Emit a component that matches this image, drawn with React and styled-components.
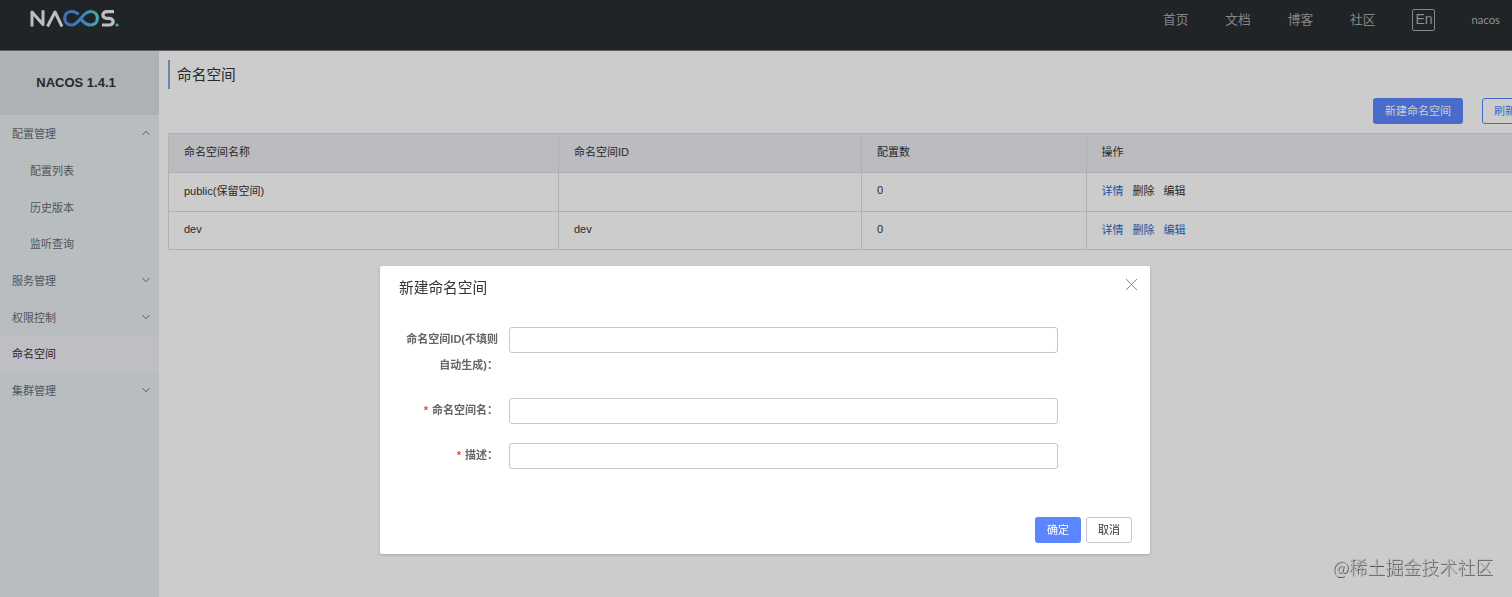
import React, { useState } from 'react';
import styled, { createGlobalStyle } from 'styled-components';

const GlobalStyle = createGlobalStyle`
  * {
    box-sizing: border-box;
  }

  body {
    margin: 0;
    overflow: hidden;
    font-family: 'Liberation Sans', 'Noto Sans CJK SC', sans-serif;
    font-size: 11px;
    color: #333;
    background: #fff;
  }

  button,
  input {
    font-family: inherit;
  }
`;

const Page = styled.div`
  display: flex;
  flex-direction: column;
  width: 1512px;
  height: 597px;
  overflow: hidden;
`;

const Header = styled.header`
  display: flex;
  flex: none;
  align-items: flex-start;
  justify-content: space-between;
  height: 51px;
  padding: 9px 12px 0 30px;
  background: #282d30;
  border-bottom: 1px solid #75787a;
`;

const Nav = styled.nav`
  display: flex;
  align-items: center;
  height: 22px;
`;

const NavLink = styled.a`
  margin-right: 37px;
  font-size: 12.7px;
  line-height: 22px;
  color: #a5a8aa;
  white-space: nowrap;
`;

const LanguageSwitch = styled.span`
  width: 23px;
  height: 22px;
  margin-right: 36px;
  border: 1px solid #a5a8aa;
  border-radius: 2px;
  font-size: 14px;
  line-height: 19px;
  text-align: center;
  color: #b0b3b5;
`;

const UserName = styled.span`
  font-family: Lato, sans-serif;
  font-size: 11.3px;
  line-height: 22px;
  color: #b4b6b8;
`;

const Body = styled.div`
  display: flex;
  flex: 1;
  min-height: 0;
`;

const Sidebar = styled.aside`
  flex: none;
  width: 159px;
  background: #e7edf1;
`;

const Version = styled.div`
  height: 64px;
  padding-right: 7px;
  font-size: 13px;
  font-weight: bold;
  line-height: 64px;
  text-align: center;
  background: #d9dfe2;
`;

const MenuItem = styled.div`
  display: flex;
  align-items: center;
  justify-content: space-between;
  height: 36.7px;
  padding: 0 9px 0 ${props => (props.$nested ? '30px' : '12px')};
  color: ${props => (props.$active ? '#333' : '#666b70')};
  background: ${props => (props.$active ? '#efeef4' : 'transparent')};
`;

const Content = styled.main`
  flex: 1;
  min-width: 0;
  padding: 9px 0 0 9px;
  overflow: hidden;
`;

const Title = styled.h1`
  height: 29px;
  margin: 0;
  padding-left: 7px;
  border-left: 2px solid #86a9db;
  font-size: 14.7px;
  font-weight: normal;
  line-height: 31px;
`;

const Toolbar = styled.div`
  display: flex;
  justify-content: flex-end;
  gap: 19px;
  height: 26px;
  margin: 9px -16px 9px 0;
`;

const Button = styled.button`
  flex: none;
  height: 26px;
  padding: 0 11px;
  border: 1px solid ${props => (props.$outline ? '#5584ff' : props.$primary ? 'transparent' : '#c4c6cf')};
  border-radius: 3px;
  font-size: 11px;
  line-height: 24px;
  white-space: nowrap;
  color: ${props => (props.$outline ? '#5584ff' : props.$primary ? '#fff' : '#333')};
  background: ${props => (props.$primary ? '#5c86ff' : props.$outline ? 'transparent' : '#fff')};
`;

const Table = styled.div`
  width: 1376px;
  border: 1px solid #dcdee3;
`;

const Row = styled.div`
  display: grid;
  grid-template-columns: 389.4px 303px 224.6px 1fr;
  height: 38px;
  background: ${props => (props.$head ? '#ebecf0' : '#fff')};

  & + & {
    height: 38.5px;
    border-top: 1px solid #dcdee3;
  }
`;

const Cell = styled.div`
  display: flex;
  align-items: center;
  gap: 9px;
  padding: 0 0 ${props => (props.$head ? '3.5px' : '3px')} 15px;

  & + & {
    padding-left: 14.5px;
    border-left: 1px solid #dcdee3;
  }
`;

const Action = styled.a`
  color: ${props => (props.$disabled ? '#333' : '#2b69c4')};
`;

const Mask = styled.div`
  position: fixed;
  inset: 0;
  display: flex;
  align-items: flex-start;
  justify-content: center;
  padding: 266px 0 0 18px;
  background: rgba(0, 0, 0, 0.2);
`;

const Dialog = styled.div`
  display: flex;
  flex-direction: column;
  width: 770px;
  height: 288px;
  padding: 9px 18px 11px 19px;
  border-radius: 2px;
  background: #fff;
  box-shadow: 0 1px 3px rgba(0, 0, 0, 0.2);
`;

const DialogHeader = styled.div`
  display: flex;
  align-items: flex-start;
  justify-content: space-between;
  height: 52px;
`;

const DialogTitle = styled.div`
  font-size: 14.7px;
  line-height: 27px;
`;

const CloseButton = styled.button`
  display: flex;
  margin: 3px -6px 0 0;
  padding: 0;
  border: none;
  background: none;
  cursor: pointer;
`;

const Field = styled.div`
  display: flex;
  min-height: 26px;
  margin-bottom: 19px;
`;

const Label = styled.label`
  width: 99px;
  margin: -1px 11px 1px 0;
  font-weight: bold;
  line-height: 26px;
  text-align: right;
  white-space: nowrap;
  color: #666;

  em {
    margin-right: 4px;
    font-style: normal;
    color: #e8492b;
  }
`;

const Input = styled.input`
  width: 549px;
  height: 26px;
  padding: 0 8px;
  border: 1px solid #c6c7ca;
  border-radius: 3px;
  font-size: 11px;
  outline: none;
`;

const DialogFooter = styled.div`
  display: flex;
  justify-content: flex-end;
  gap: 5px;
  margin-top: auto;
`;

const Watermark = styled.div`
  position: fixed;
  right: 19px;
  bottom: 18px;
  font-family: 'Noto Sans CJK SC', sans-serif;
  font-size: 18px;
  font-weight: 300;
  line-height: 26px;
  color: #bbb;
  text-shadow: 1px 1px 0 #555;
`;

const Logo = () => (
  <svg width="90" height="20" viewBox="0 0 90 20" fill="none" strokeWidth="3">
    <defs>
      <linearGradient id="wave" x1="33" y1="0" x2="70" y2="0" gradientUnits="userSpaceOnUse">
        <stop offset="0" stopColor="#5a86e8" />
        <stop offset="0.5" stopColor="#4d9fe6" />
        <stop offset="1" stopColor="#55dfdf" />
      </linearGradient>
    </defs>
    <path d="M2 17.500V3L13 15.500V1.300M17.500 17.500L25 3L32 17.500" stroke="#eee" strokeLinejoin="round" />
    <path
      d="M48.500 5.500C46.500 3.300 44.500 2.500 41.500 2.500C32.500 2.500 32.500 16 41.500 16C49 16 52.500 2.500 60.500 2.500C69.700 2.500 69.700 16 60.500 16C56.500 16 53.500 13.500 50.500 9.500"
      stroke="url(#wave)"
      strokeWidth="3.200"
    />
    <path d="M84 2.600H77C71.500 2.600 71.500 9.300 77 9.300H79C84.500 9.300 84.500 16 79 16H72" stroke="#eee" strokeWidth="3.200" />
    <circle cx="87" cy="16" r="1.600" fill="#55dfdf" />
  </svg>
);

const Arrow = ({ up }) => (
  <svg width="8" height="6" viewBox="0 0 8 6" fill="none" stroke="#73787c">
    <path d={up ? 'M0.500 5L4 1.200L7.500 5' : 'M0.500 1L4 4.800L7.500 1'} />
  </svg>
);

const navLinks = ['首页', '文档', '博客', '社区'];

const menu = [
  { name: '配置管理', arrow: true, open: true },
  { name: '配置列表', nested: true },
  { name: '历史版本', nested: true },
  { name: '监听查询', nested: true },
  { name: '服务管理', arrow: true },
  { name: '权限控制', arrow: true },
  { name: '命名空间', active: true },
  { name: '集群管理', arrow: true },
];

const namespaces = [
  { name: 'public(保留空间)', id: '', count: 0, reserved: true },
  { name: 'dev', id: 'dev', count: 0 },
];

const NamespaceDialog = ({ onClose }) => (
  <Mask>
    <Dialog role="dialog">
      <DialogHeader>
        <DialogTitle>新建命名空间</DialogTitle>
        <CloseButton onClick={onClose} aria-label="close">
          <svg width="13" height="13" viewBox="0 0 13 13" stroke="#888">
            <path d="M1 1L12 12M12 1L1 12" />
          </svg>
        </CloseButton>
      </DialogHeader>
      <Field>
        <Label htmlFor="namespaceId">
          命名空间ID(不填则
          <br />
          自动生成)：
        </Label>
        <Input id="namespaceId" />
      </Field>
      <Field>
        <Label htmlFor="namespaceName">
          <em>*</em>命名空间名：
        </Label>
        <Input id="namespaceName" />
      </Field>
      <Field>
        <Label htmlFor="description">
          <em>*</em>描述：
        </Label>
        <Input id="description" />
      </Field>
      <DialogFooter>
        <Button $primary onClick={onClose}>确定</Button>
        <Button onClick={onClose}>取消</Button>
      </DialogFooter>
    </Dialog>
  </Mask>
);

const App = () => {
  const [isOpen, setIsOpen] = useState(true);

  return (
    <>
      <GlobalStyle />
      <Page>
        <Header>
          <Logo />
          <Nav>
            {navLinks.map(link => (
              <NavLink key={link}>{link}</NavLink>
            ))}
            <LanguageSwitch>En</LanguageSwitch>
            <UserName>nacos</UserName>
          </Nav>
        </Header>
        <Body>
          <Sidebar>
            <Version>NACOS 1.4.1</Version>
            {menu.map(item => (
              <MenuItem key={item.name} $nested={item.nested} $active={item.active}>
                {item.name}
                {item.arrow && <Arrow up={item.open} />}
              </MenuItem>
            ))}
          </Sidebar>
          <Content>
            <Title>命名空间</Title>
            <Toolbar>
              <Button $primary onClick={() => setIsOpen(true)}>新建命名空间</Button>
              <Button $outline>刷新</Button>
            </Toolbar>
            <Table>
              <Row $head>
                <Cell $head>命名空间名称</Cell>
                <Cell $head>命名空间ID</Cell>
                <Cell $head>配置数</Cell>
                <Cell $head>操作</Cell>
              </Row>
              {namespaces.map(item => (
                <Row key={item.name}>
                  <Cell>{item.name}</Cell>
                  <Cell>{item.id}</Cell>
                  <Cell>{item.count}</Cell>
                  <Cell>
                    <Action>详情</Action>
                    <Action $disabled={item.reserved}>删除</Action>
                    <Action $disabled={item.reserved}>编辑</Action>
                  </Cell>
                </Row>
              ))}
            </Table>
          </Content>
        </Body>
      </Page>
      {isOpen && <NamespaceDialog onClose={() => setIsOpen(false)} />}
      <Watermark>@稀土掘金技术社区</Watermark>
    </>
  );
};

export default App;
